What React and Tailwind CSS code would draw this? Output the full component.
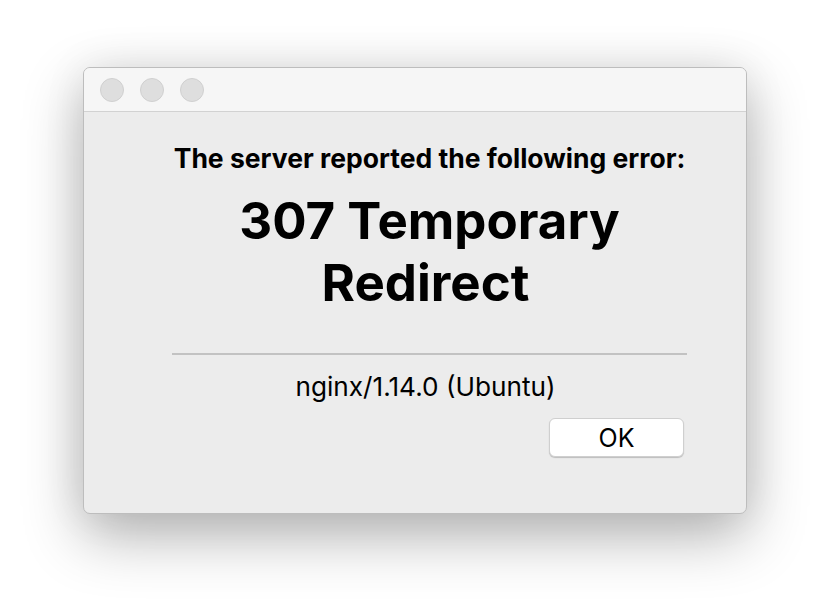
export default function App() {
  return (
    <div className="min-h-screen bg-white pl-[83px] pt-[67px]" style={{ fontFamily: 'Inter, "Noto Sans", sans-serif' }}>
      <div className="w-[664px] h-[447px] rounded-[7px] border border-[#bdbdbd] bg-[#ececec] shadow-[0_22px_60px_rgba(0,0,0,0.3),0_0_45px_rgba(0,0,0,0.07)] overflow-hidden flex flex-col">
        {/* title bar */}
        <div className="h-[44px] shrink-0 bg-[#f6f6f6] border-b border-[#d2d2d2] flex items-center pl-[16px] gap-[16px]">
          <div className="w-[24px] h-[24px] rounded-full bg-[#dedede] border border-[#d0d0d0]" />
          <div className="w-[24px] h-[24px] rounded-full bg-[#dedede] border border-[#d0d0d0]" />
          <div className="w-[24px] h-[24px] rounded-full bg-[#dedede] border border-[#d0d0d0]" />
        </div>

        {/* body */}
        <div className="ml-[88px] w-[515px] flex flex-col items-center text-black">
          <p className="mt-[30px] text-[26.5px] leading-[32px] font-bold whitespace-nowrap">The server reported the following error:</p>
          <h1 className="mt-[16px] text-[51px] leading-[62px] font-bold text-center flex flex-col items-center">
            <span>307 Temporary</span>
            <span className="mr-[8px]">Redirect</span>
          </h1>
          <div className="mt-[39px] w-full h-[2px] bg-[#c2c2c2]" />
          <p className="mt-[16px] mr-[8px] text-[26.2px] leading-[32px]">nginx/1.14.0 (Ubuntu)</p>
          <div className="self-end mt-[15px] mr-[3px]">
            <button className="w-[135px] h-[39px] rounded-[6px] bg-white border border-[#cfcfcf] shadow-[0_1px_1px_rgba(0,0,0,0.2)] text-[25px] leading-[30px] text-black">
              OK
            </button>
          </div>
        </div>
      </div>
    </div>
  );
}
